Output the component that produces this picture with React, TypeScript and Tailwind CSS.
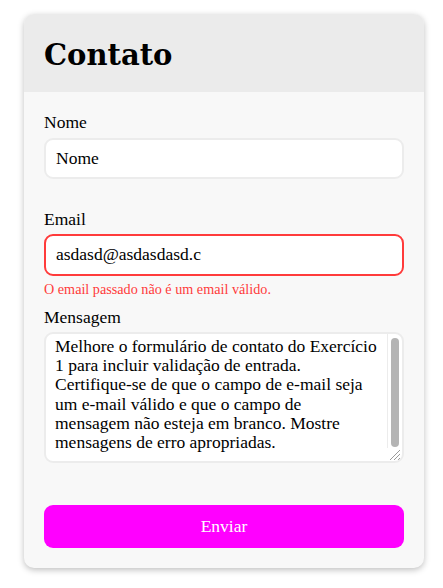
import { useState } from 'react';

const serif = "font-['Liberation_Serif','DejaVu_Serif',serif]";
const titleFont = "font-['DejaVu_Serif','Liberation_Serif',serif]";

const MESSAGE_LINES = [
  'Melhore o formulário de contato do Exercício',
  '1 para incluir validação de entrada.',
  'Certifique-se de que o campo de e-mail seja',
  'um e-mail válido e que o campo de',
  'mensagem não esteja em branco. Mostre',
  'mensagens de erro apropriadas.',
];

function ResizeGrip() {
  return (
    <svg width="14" height="13" viewBox="0 0 14 13" className="block">
      <line x1="3" y1="12" x2="13" y2="2" stroke="#9a9a9a" strokeWidth="1" />
      <line x1="7" y1="12" x2="13" y2="6" stroke="#9a9a9a" strokeWidth="1" />
      <line x1="11" y1="12" x2="13" y2="10" stroke="#9a9a9a" strokeWidth="1" />
    </svg>
  );
}

export default function App() {
  const [nome] = useState('');
  const [email] = useState('asdasd@asdasdasd.c');

  return (
    <div className={`min-h-screen bg-white pt-[14px] text-black ${serif}`}>
      <div className="ml-6 w-[400px] overflow-hidden rounded-[10px] bg-[#f8f8f8] shadow-[0_2px_6px_rgba(0,0,0,0.25)]">
        {/* Header */}
        <div className="h-[78px] bg-[#ebebeb] pl-5 pt-[22px]">
          <h1 className={`${titleFont} text-[29px] font-bold leading-[38px]`}>Contato</h1>
        </div>

        {/* Form */}
        <div className="px-5 pt-5 pb-5">
          <label className="block text-[17.5px] leading-[20px]">Nome</label>
          <div className="mt-[6px] flex h-[41px] items-center rounded-[9px] border-2 border-[#ececec] bg-white pl-[10px] text-[17.5px] leading-[19.2px]">
            {nome || 'Nome'}
          </div>

          <label className="mt-[30px] block text-[17.5px] leading-[20px]">Email</label>
          <div className="mt-[5px] flex h-[42px] items-center rounded-[9px] border-2 border-[#ff3b3b] bg-white pl-[10px] text-[17.5px] leading-[19.2px]">
            {email}
          </div>
          <p className="mt-[5px] text-[14.2px] leading-[16px] text-[#ff3b3b]">
            O email passado não é um email válido.
          </p>

          <label className="mt-[10px] block text-[17.5px] leading-[20px]">Mensagem</label>
          <div className="mt-[5px] flex h-[131px] overflow-hidden rounded-[9px] border-2 border-[#ececec] bg-white">
            <div className="flex-1 pl-[9px] pt-[3px] text-[17.5px] leading-[19.2px]">
              {MESSAGE_LINES.map((line) => (
                <div key={line} className="whitespace-nowrap">
                  {line}
                </div>
              ))}
            </div>
            <div className="flex w-[15px] flex-col">
              <div className="flex-1 border-l border-[#ececec] pt-[4px]">
                <div className="mx-auto h-[109px] w-[8px] rounded-full bg-[#b4b4b4]" />
              </div>
              <div className="h-[13px]">
                <ResizeGrip />
              </div>
            </div>
          </div>

          <button className="mt-[42px] flex h-[43px] w-full items-center justify-center rounded-[9px] bg-[#ff00ff] text-[17.5px] text-white">
            Enviar
          </button>
        </div>
      </div>
    </div>
  );
}
